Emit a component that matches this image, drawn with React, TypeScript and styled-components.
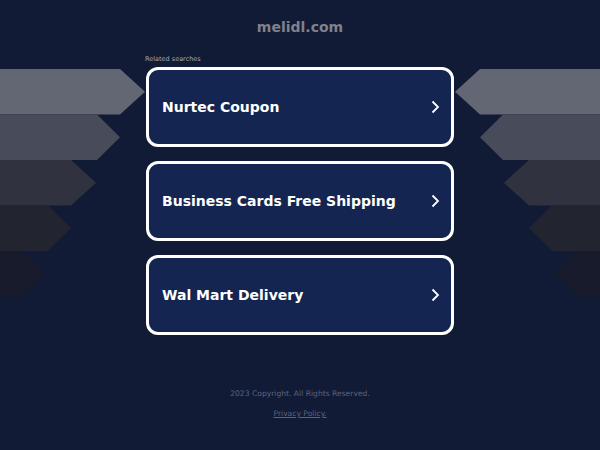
import styled, { createGlobalStyle } from 'styled-components'

const GlobalStyle = createGlobalStyle`
  html, body {
    margin: 0;
    padding: 0;
    background: #111b35;
  }
  body {
    font-family: 'DejaVu Sans', 'Liberation Sans', sans-serif;
  }
`

const searches = ['Nurtec Coupon', 'Business Cards Free Shipping', 'Wal Mart Delivery']

const stripes = [
  { flat: 120, tip: 145, color: '#636673' },
  { flat: 97, tip: 120, color: '#484b5a' },
  { flat: 71, tip: 96, color: '#30333f' },
  { flat: 48, tip: 71, color: '#222430' },
  { flat: 22, tip: 46, color: '#171b2c' },
]

function Stripes({ flip }: { flip?: boolean }) {
  const h = 45.5
  return (
    <StripeArt $flip={flip} width="146" height="230" viewBox="0 0 146 230">
      {stripes.map((s, i) => {
        const top = i * h
        const mid = top + h / 2
        const bottom = top + h
        return (
          <polygon
            key={i}
            points={`0,${top} ${s.flat},${top} ${s.tip},${mid} ${s.flat},${bottom} 0,${bottom}`}
            fill={s.color}
          />
        )
      })}
    </StripeArt>
  )
}

function Chevron() {
  return (
    <svg width="10" height="14" viewBox="0 0 10 14">
      <polyline points="2.5,1.5 8,7 2.5,12.5" fill="none" stroke="#fff" strokeWidth="1.8" />
    </svg>
  )
}

export default function App() {
  return (
    <>
      <GlobalStyle />
      <Page>
        <Domain>melidl.com</Domain>
        <Stage>
          <Stripes />
          <Column>
            <Label>Related searches</Label>
            <CardList>
              {searches.map((s) => (
                <Card key={s} href="#">
                  <span>{s}</span>
                  <Chevron />
                </Card>
              ))}
            </CardList>
          </Column>
          <Stripes flip />
        </Stage>
        <Footer>
          <span>2023 Copyright. All Rights Reserved.</span>
          <PrivacyLink href="#">Privacy Policy.</PrivacyLink>
        </Footer>
      </Page>
    </>
  )
}

const Page = styled.main`
  display: flex;
  flex-direction: column;
  align-items: center;
  min-height: 450px;
  overflow: hidden;
`

const Domain = styled.h1`
  margin: 18px 0 0;
  font-size: 14px;
  line-height: 18px;
  font-weight: 700;
  color: #7f828c;
`

const Stage = styled.section`
  display: grid;
  grid-template-columns: 146px 308px 146px;
  align-items: start;
  margin-top: 18px;
`

const StripeArt = styled.svg<{ $flip?: boolean }>`
  display: block;
  margin-top: 15px;
  transform: ${({ $flip }) => ($flip ? 'scaleX(-1)' : 'none')};
`

const Column = styled.div`
  display: flex;
  flex-direction: column;
`

const Label = styled.div`
  margin-left: -1px;
  font-size: 6.5px;
  line-height: 10px;
  color: #a4a8b6;
  margin-bottom: 3px;
`

const CardList = styled.div`
  display: flex;
  flex-direction: column;
  gap: 14px;
`

const Card = styled.a`
  box-sizing: border-box;
  display: flex;
  align-items: center;
  justify-content: space-between;
  height: 80px;
  padding: 0 11px 0 13px;
  border: 3px solid #ffffff;
  border-radius: 12px;
  background: #132550;
  color: #ffffff;
  text-decoration: none;
  font-size: 14px;
  font-weight: 700;
`

const Footer = styled.footer`
  display: flex;
  flex-direction: column;
  align-items: center;
  gap: 8px;
  margin-top: 53px;
  font-size: 7.6px;
  line-height: 12px;
  color: #5b6380;
`

const PrivacyLink = styled.a`
  color: #5b6380;
  text-decoration: underline;
`
